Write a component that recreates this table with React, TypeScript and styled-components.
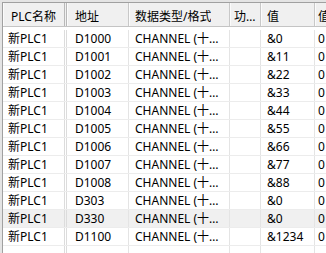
import React, { FC } from 'react';
import styled, { createGlobalStyle } from 'styled-components';

const GlobalStyle = createGlobalStyle`
  html, body {
    margin: 0;
    padding: 0;
    background: #e4e4e4;
    overflow: hidden;
  }
`;

type Column = {
  title: string;
  width: number;
  headPad: number;
  cellPad: number;
  frozen?: boolean;
};

const columns: Column[] = [
  { title: 'PLC名称', width: 64, headPad: 8, cellPad: 5, frozen: true },
  { title: '地址', width: 62, headPad: 8, cellPad: 8 },
  { title: '数据类型/格式', width: 101, headPad: 6, cellPad: 6 },
  { title: '功能描述', width: 31, headPad: 4, cellPad: 4 },
  { title: '值', width: 54, headPad: 6, cellPad: 6 },
  { title: '值(十六进制)', width: 80, headPad: 3, cellPad: 3 },
];

const values = ['&0', '&11', '&22', '&33', '&44', '&55', '&66', '&77', '&88', '&0', '&0', '&1234'];
const addresses = ['D1000', 'D1001', 'D1002', 'D1003', 'D1004', 'D1005', 'D1006', 'D1007', 'D1008', 'D303', 'D330', 'D1100'];

const rows = addresses.map((addr, i) => ['新PLC1', addr, 'CHANNEL (十进制)', '', values[i], '0']);
const selectedRow = 10;

const Frame = styled.div`
  margin: 2px 0 0 2px;
  height: calc(100vh - 2px);
  display: flex;
  flex-direction: column;
  background: #fff;
  border-top: 1px solid #a0a0a0;
  border-left: 1px solid #a0a0a0;
  overflow: hidden;
  font-family: 'Noto Sans', 'Noto Sans CJK SC', sans-serif;
  font-size: 12px;
  color: #000;
`;

const HeaderRow = styled.div`
  display: flex;
  flex: none;
  height: 23px;
  background: #f0f0f0;
  border-bottom: 1px solid #c4c4c4;
`;

const HeaderCell = styled.div<{ $width: number; $pad: number; $frozen?: boolean }>`
  flex: none;
  box-sizing: border-box;
  width: ${({ $width }) => $width}px;
  padding: 2px 4px 0 ${({ $pad }) => $pad}px;
  display: flex;
  align-items: center;
  white-space: nowrap;
  overflow: hidden;
  border-right: ${({ $frozen }) => ($frozen ? '3px double #b8b8b8' : '1px solid #c8c8c8')};
  box-shadow: inset 1px 0 #fbfbfb;

  span {
    overflow: hidden;
    text-overflow: ellipsis;
  }
`;

const Body = styled.div`
  flex: 1;
  display: flex;
  flex-direction: column;
  padding-top: 3px;
`;

const Row = styled.div<{ $selected?: boolean }>`
  display: flex;
  flex: none;
  height: 17px;
  border-bottom: 1px solid #ececec;
  background: ${({ $selected }) => ($selected ? '#f0f0f0' : '#fff')};
`;

const FillerRow = styled.div`
  display: flex;
  flex: 1;
`;

const Cell = styled.div<{ $width: number; $pad: number; $frozen?: boolean }>`
  flex: none;
  box-sizing: border-box;
  width: ${({ $width }) => $width}px;
  padding: 0 6px 0 ${({ $pad }) => $pad}px;
  line-height: 17px;
  white-space: nowrap;
  overflow: hidden;
  text-overflow: ellipsis;
  border-right: ${({ $frozen }) => ($frozen ? '3px double #dcdcdc' : '1px solid #e4e4e4')};
`;

const App: FC = () => (
  <>
    <GlobalStyle />
    <Frame>
      <HeaderRow>
        {columns.map((c) => (
          <HeaderCell key={c.title} $width={c.width} $pad={c.headPad} $frozen={c.frozen}>
            <span>{c.title}</span>
          </HeaderCell>
        ))}
      </HeaderRow>
      <Body>
        {rows.map((r, i) => (
          <Row key={i} $selected={i === selectedRow}>
            {r.map((text, j) => (
              <Cell key={j} $width={columns[j].width} $pad={columns[j].cellPad} $frozen={columns[j].frozen}>
                {text}
              </Cell>
            ))}
          </Row>
        ))}
        <FillerRow>
          {columns.map((c) => (
            <Cell key={c.title} $width={c.width} $pad={c.cellPad} $frozen={c.frozen} />
          ))}
        </FillerRow>
      </Body>
    </Frame>
  </>
);

export default App;
